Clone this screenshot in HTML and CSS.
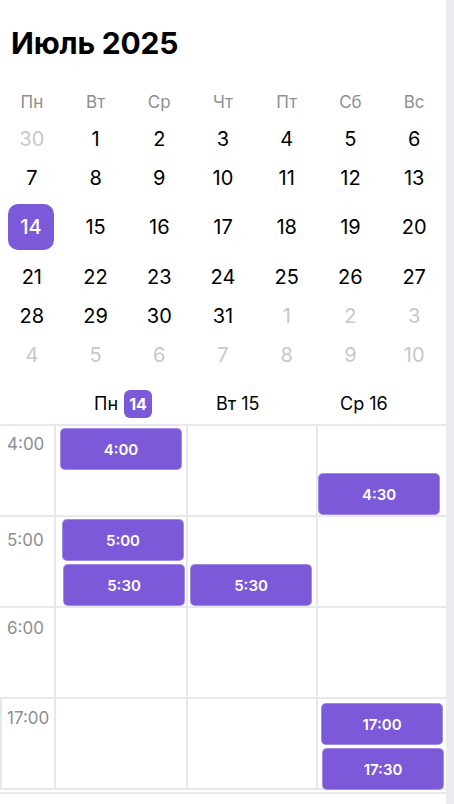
FILE: index.html
```html
<!DOCTYPE html>
<html lang="ru">
<head>
<meta charset="utf-8">
<title>Календарь</title>
<link rel="stylesheet" href="styles.css">
</head>
<body>
<div class="app">
  <main class="main">
    <h1 class="title">Июль 2025</h1>
    <div class="month">
      <div class="wd">Пн</div><div class="wd">Вт</div><div class="wd">Ср</div><div class="wd">Чт</div><div class="wd">Пт</div><div class="wd">Сб</div><div class="wd">Вс</div>
      <div class="day muted">30</div><div class="day">1</div><div class="day">2</div><div class="day">3</div><div class="day">4</div><div class="day">5</div><div class="day">6</div>
      <div class="day">7</div><div class="day">8</div><div class="day">9</div><div class="day">10</div><div class="day">11</div><div class="day">12</div><div class="day">13</div>
      <div class="day"><span class="sel">14</span></div><div class="day">15</div><div class="day">16</div><div class="day">17</div><div class="day">18</div><div class="day">19</div><div class="day">20</div>
      <div class="day">21</div><div class="day">22</div><div class="day">23</div><div class="day">24</div><div class="day">25</div><div class="day">26</div><div class="day">27</div>
      <div class="day">28</div><div class="day">29</div><div class="day">30</div><div class="day">31</div><div class="day muted">1</div><div class="day muted">2</div><div class="day muted">3</div>
      <div class="day muted">4</div><div class="day muted">5</div><div class="day muted">6</div><div class="day muted">7</div><div class="day muted">8</div><div class="day muted">9</div><div class="day muted">10</div>
    </div>

    <section class="week">
      <div class="week-head">
        <div></div>
        <div class="wh">Пн<span class="wh-badge">14</span></div>
        <div class="wh">Вт 15</div>
        <div class="wh">Ср 16</div>
      </div>
      <div class="week-grid">
        <div class="hour">
          <div class="tcell">4:00</div>
          <div class="dcell"><div class="ev ml4">4:00</div></div>
          <div class="dcell"></div>
          <div class="dcell"><div class="ev ev-second ml0">4:30</div></div>
        </div>
        <div class="hour">
          <div class="tcell tcell-low">5:00</div>
          <div class="dcell"><div class="ev ml6">5:00</div><div class="ev ml7">5:30</div></div>
          <div class="dcell"><div class="ev ev-second ml2">5:30</div></div>
          <div class="dcell"></div>
        </div>
        <div class="hour">
          <div class="tcell tcell-mid">6:00</div>
          <div class="dcell"></div>
          <div class="dcell"></div>
          <div class="dcell"></div>
        </div>
        <div class="hour">
          <div class="tcell tcell-edge">17:00</div>
          <div class="dcell"></div>
          <div class="dcell"></div>
          <div class="dcell dcell-drop"><div class="ev ml3">17:00</div><div class="ev ml4">17:30</div></div>
        </div>
      </div>
    </section>
  </main>
  <div class="rail"></div>
</div>
</body>
</html>
```

FILE: styles.css
```css
* { box-sizing: border-box; }

html, body {
  margin: 0;
  padding: 0;
  background: #ffffff;
}

body {
  font-family: Inter, "Noto Sans", "Liberation Sans", sans-serif;
  color: #000000;
}

.app {
  display: flex;
  min-height: 100vh;
}

.main {
  width: 446px;
  flex: none;
}

.rail {
  flex: 1;
  background: #ebebf0;
}

.title {
  margin: 0;
  padding: 25px 0 0 11px;
  font-size: 30px;
  line-height: 36px;
  font-weight: 700;
  letter-spacing: -0.2px;
}

.month {
  margin-top: 24px;
  display: grid;
  grid-template-columns: repeat(7, 1fr);
}

.wd {
  height: 34px;
  display: flex;
  align-items: center;
  justify-content: center;
  font-size: 17px;
  color: #8e8e93;
}

.day {
  min-height: 39px;
  display: flex;
  align-items: center;
  justify-content: center;
  font-size: 20px;
}

.day.muted {
  color: #c7c7cc;
}

.sel {
  width: 46px;
  height: 46px;
  margin: 7px 2px 7px 0;
  border-radius: 10px;
  background: #7b59d9;
  color: #ffffff;
  font-weight: 500;
  display: flex;
  align-items: center;
  justify-content: center;
}

.week {
  margin-top: 10px;
}

.week-head {
  display: grid;
  grid-template-columns: 94px 122px 124px 1fr;
  height: 42px;
  border-bottom: 2px solid #e8e8ec;
  align-items: center;
  padding-bottom: 1px;
}

.wh {
  display: flex;
  align-items: center;
  font-size: 18px;
  white-space: nowrap;
}

.wh-badge {
  margin-left: 6px;
  width: 28px;
  height: 28px;
  border-radius: 6px;
  background: #7b59d9;
  color: #ffffff;
  font-size: 16px;
  font-weight: 700;
  display: flex;
  align-items: center;
  justify-content: center;
}

.week-grid {
  padding-bottom: 2px;
  border-bottom: 2px solid #e8e8ec;
}

.hour {
  display: grid;
  grid-template-columns: 54px 132px 130px 1fr;
  height: 91px;
  border-bottom: 2px solid #e8e8ec;
}

.tcell {
  padding: 8px 0 0 7px;
  font-size: 17px;
  color: #8e8e93;
}

.tcell-low { padding-top: 13px; }
.tcell-mid { padding-top: 10px; }
.tcell-edge {
  border-left: 2px solid #e8e8ec;
  padding-left: 5px;
  padding-top: 9px;
}

.dcell {
  border-left: 2px solid #e8e8ec;
  padding-top: 2px;
  display: grid;
  grid-template-rows: 42px 42px;
  row-gap: 3px;
  align-content: start;
}

.dcell-drop {
  padding-top: 4px;
}

.ev {
  width: 122px;
  height: 42px;
  border-radius: 5px;
  background: #7b59d9;
  border: 1px solid rgba(255, 255, 255, 0.3);
  color: #ffffff;
  font-size: 15px;
  font-weight: 600;
  display: flex;
  align-items: center;
  justify-content: center;
}

.ev-second { grid-row: 2; }

.ml0 { margin-left: 0; }
.ml2 { margin-left: 2px; }
.ml3 { margin-left: 3px; }
.ml4 { margin-left: 4px; }
.ml6 { margin-left: 6px; }
.ml7 { margin-left: 7px; }
```
